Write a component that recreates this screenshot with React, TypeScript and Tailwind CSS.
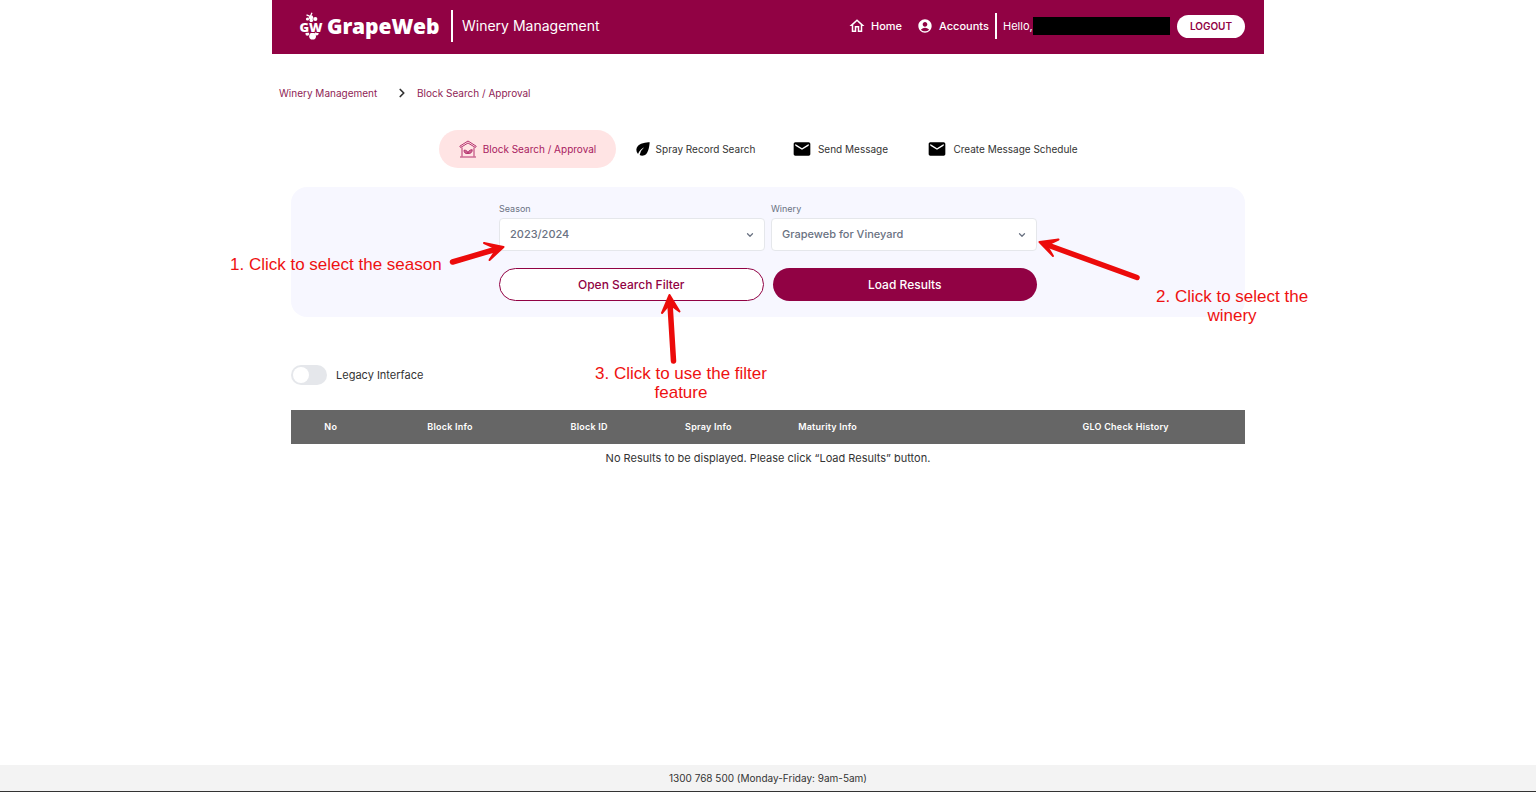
import type { ReactNode } from "react";
import { MdAccountCircle, MdEco, MdEmail, MdOutlineHome } from "react-icons/md";
import { ChevronDown, ChevronRight } from "lucide-react";

const tabClass = "flex h-[38px] shrink-0 items-center justify-center rounded-full text-[10px] whitespace-nowrap";

/** Grape bunch with the GW monogram across it. */
function GrapeLogo() {
  return (
    <svg width="26" height="28" viewBox="0 0 26 28" fill="none" aria-label="GW">
      <g fill="#fff">
        <circle cx="9.5" cy="7" r="1.6" />
        <circle cx="13" cy="5.5" r="2.2" />
        <circle cx="17.3" cy="7" r="2.1" />
        <circle cx="13.3" cy="8.5" r="1.8" />
        <circle cx="9.3" cy="21.8" r="1.9" />
        <circle cx="18.7" cy="21.5" r="1.9" />
        <circle cx="14.6" cy="24.2" r="3.4" />
      </g>
      <path d="M12.5 4 14 .8M8.5 2.8l3 1.4" stroke="#fff" strokeWidth="1.3" />
      <text
        x="13"
        y="19.5"
        textAnchor="middle"
        fill="#fff"
        stroke="#910244"
        strokeWidth="2"
        paintOrder="stroke"
        className="font-['Noto_Sans',sans-serif] text-[13px] font-black"
      >
        GW
      </text>
    </svg>
  );
}

function BarnIcon() {
  return (
    <svg width="18" height="18" viewBox="0 0 18 18" fill="none" stroke="#b5336f" strokeWidth="1" aria-hidden>
      <path d="M.8 6.2 9 1l8.2 5.2-.8 1.3L9 3 1.6 7.5z" />
      <path d="M3 7.5v9M15 7.5v9M1 17h16" />
      <path
        d="M9 13.5c-3 .5-4-1.2-4-3.3 2.2-.2 3.7.8 4 3.3zM9 13.5c.2-2.6 1.7-3.7 4.2-3.8.1 2.4-1.2 4-4.2 3.8z"
        fill="#b5336f"
        fillOpacity=".7"
      />
    </svg>
  );
}

interface SelectFieldProps {
  id: string;
  label: string;
  value: string;
}

function SelectField({ id, label, value }: SelectFieldProps) {
  return (
    <div className="flex flex-col gap-[3px]">
      <label htmlFor={id} className="text-[9px] leading-3 text-gray-500">
        {label}
      </label>
      <div className="relative">
        <select
          id={id}
          className="h-[33px] w-full appearance-none rounded border border-gray-200 bg-white px-[10px] text-[11px] font-medium text-gray-500"
        >
          <option>{value}</option>
        </select>
        <ChevronDown
          size={10}
          strokeWidth={3}
          className="pointer-events-none absolute top-3 right-[10px] text-gray-500"
        />
      </div>
    </div>
  );
}

interface NoteProps {
  className: string;
  children: ReactNode;
}

function Note({ className, children }: NoteProps) {
  return (
    <p
      className={`absolute text-center font-['Liberation_Sans',Arial,sans-serif] text-[17px] leading-[19px] whitespace-nowrap text-[#ee1111] ${className}`}
    >
      {children}
    </p>
  );
}

function Arrows() {
  return (
    <svg
      width="720"
      height="140"
      viewBox="440 230 720 140"
      fill="none"
      stroke="#ec0b0b"
      strokeLinecap="round"
      strokeLinejoin="round"
      className="pointer-events-none absolute top-[230px] left-[168px]"
      aria-hidden
    >
      <g strokeWidth="5.5">
        <path d="M452.5 262 495 249.5" />
        <path d="M1137 277.5 1049 245.5" />
        <path d="M673.5 361 670 304" />
      </g>
      <g strokeWidth="2" fill="#ec0b0b">
        <path d="M503.5 247 484 243 494 247.5 495 251.5 489.5 260z" />
        <path d="M1039.5 242 1058.5 239.5 1049 244 1048.5 248.5 1053 256z" />
        <path d="M669.5 295 679.5 311.5 672 306 668 306 662 313z" />
      </g>
    </svg>
  );
}

export default function App() {
  return (
    <div className="flex min-h-screen flex-col overflow-x-hidden bg-white font-[Inter,sans-serif] text-[11px] text-[#333]">
      <div className="relative mx-auto w-full max-w-[992px] flex-1">
        <header className="flex h-[54px] items-center justify-between bg-[#910244] pr-[19px] pb-[2px] pl-[26px] text-white">
          <div className="flex items-center">
            <GrapeLogo />
            <span className="ml-[3px] w-[116px] font-['Noto_Sans',sans-serif] text-[21px] leading-6 font-black">
              GrapeWeb
            </span>
            <span className="ml-2 h-8 w-[2px] bg-white" />
            <span className="ml-[9px] text-[14px] leading-4">Winery Management</span>
          </div>
          <div className="flex items-center">
            <a href="#home" className="flex w-[69px] items-center gap-[5px] font-medium">
              <MdOutlineHome size={18} />
              Home
            </a>
            <a href="#accounts" className="flex w-[78px] items-center gap-[6px] font-medium">
              <MdAccountCircle size={16} />
              Accounts
            </a>
            <span className="h-[26px] w-[2px] bg-white" />
            <span className="ml-[6px] w-[30px]">Hello,</span>
            <span className="h-[18px] w-[137px] bg-black" />
            <button className="ml-[7px] h-[23px] w-[68px] rounded-full bg-white text-[10px] font-semibold text-[#910244]">
              LOGOUT
            </button>
          </div>
        </header>

        <nav aria-label="Breadcrumb" className="mt-[31px] flex h-4 items-center pl-[7px] text-[10px] text-[#8f2455]">
          <a href="#winery" className="w-[116px]">
            Winery Management
          </a>
          <ChevronRight size={14} strokeWidth={3} className="mr-2 text-[#333]" />
          <a href="#blocks">Block Search / Approval</a>
        </nav>

        <div className="mt-[29px] flex justify-center">
          <button className={`${tabClass} w-[177px] gap-[6px] bg-[#ffe4e4] text-[#a8205f]`}>
            <BarnIcon />
            Block Search / Approval
          </button>
          <button className={`${tabClass} w-[156px] gap-[3px]`}>
            <MdEco size={20} className="text-black" />
            Spray Record Search
          </button>
          <button className={`${tabClass} w-[136px] gap-[6px]`}>
            <MdEmail size={20} className="text-black" />
            Send Message
          </button>
          <button className={`${tabClass} w-[189px] gap-[6px]`}>
            <MdEmail size={20} className="text-black" />
            Create Message Schedule
          </button>
        </div>

        <main className="px-[19px]">
          <section className="mt-[19px] rounded-2xl bg-[#f7f7ff] py-4">
            <div className="mx-auto max-w-[538px]">
              <div className="grid grid-cols-2 gap-[6px]">
                <SelectField id="season" label="Season" value="2023/2024" />
                <SelectField id="winery" label="Winery" value="Grapeweb for Vineyard" />
              </div>
              <div className="mt-[17px] grid grid-cols-2 gap-[9px]">
                <button className="h-[33px] rounded-full border border-[#910244] bg-white text-[12px] font-medium text-[#910244]">
                  Open Search Filter
                </button>
                <button className="h-[33px] rounded-full bg-[#910244] text-[12px] font-medium text-white">
                  Load Results
                </button>
              </div>
            </div>
          </section>

          <label className="mt-12 flex h-5 w-fit items-center gap-[9px]">
            <input type="checkbox" role="switch" className="peer sr-only" />
            <span className="flex h-5 w-9 items-center rounded-full bg-gray-200 p-[2px] peer-checked:justify-end peer-checked:bg-[#910244]">
              <span className="size-4 rounded-full bg-white" />
            </span>
            Legacy Interface
          </label>

          <table className="mt-[25px] w-full table-fixed text-center">
            <colgroup>
              <col className="w-1/12" />
              <col className="w-1/6" />
              <col className="w-1/8" />
              <col className="w-1/8" />
              <col className="w-1/8" />
              <col className="w-1/8" />
              <col className="w-1/4" />
            </colgroup>
            <thead className="bg-[#666] text-[9px] tracking-wide text-white">
              <tr className="h-[34px]">
                <th className="font-semibold">No</th>
                <th className="font-semibold">Block Info</th>
                <th className="font-semibold">Block ID</th>
                <th className="font-semibold">Spray Info</th>
                <th className="font-semibold">Maturity Info</th>
                <td />
                <th className="font-semibold">GLO Check History</th>
              </tr>
            </thead>
            <tbody>
              <tr className="h-7">
                <td colSpan={7}>No Results to be displayed. Please click “Load Results” button.</td>
              </tr>
            </tbody>
          </table>
        </main>

        <Arrows />
        <Note className="top-[255px] left-[-42px]">1. Click to select the season</Note>
        <Note className="top-[287px] left-[884px]">
          2. Click to select the
          <br />
          winery
        </Note>
        <Note className="top-[364px] left-[323px]">
          3. Click to use the filter
          <br />
          feature
        </Note>
      </div>

      <footer className="flex h-[27px] items-center justify-center border-b border-[#333] bg-[#f3f3f3] text-[10px]">
        1300 768 500 (Monday-Friday: 9am-5am)
      </footer>
    </div>
  );
}
